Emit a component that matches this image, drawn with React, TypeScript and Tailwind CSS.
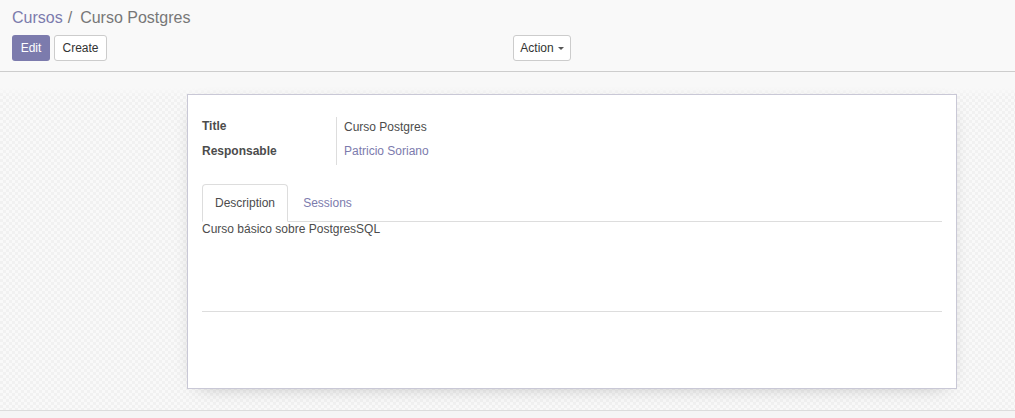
export default function App() {
  return (
    <div className="w-[1015px] h-[418px] overflow-hidden flex flex-col bg-white font-['Liberation_Sans',Arial,sans-serif] text-[12px] text-[#4c4c4c]">
      {/* control panel */}
      <div className="h-[72px] shrink-0 bg-[#f9f9f9] border-b border-[#cdcdcd] px-[12px] pt-[6px]">
        <div className="h-[24px] flex items-center text-[16px]">
          <a className="text-[#7c7bad]">Cursos</a>
          <span className="text-[#777] ml-[5px] mr-[8px]">/</span>
          <span className="text-[#777]">Curso Postgres</span>
        </div>
        <div className="mt-[5px] flex items-center">
          <button className="h-[26px] w-[38px] rounded-[3px] bg-[#7c7bad] text-white text-[12px]">Edit</button>
          <button className="ml-[4px] h-[26px] w-[53px] rounded-[3px] bg-white border border-[#ccc] text-[#333] text-[12px]">
            Create
          </button>
          <button className="ml-[406px] h-[26px] w-[58px] rounded-[3px] bg-white border border-[#ccc] text-[#333] text-[12px] flex items-center justify-center gap-[4px]">
            Action
            <span className="w-0 h-0 border-x-[3px] border-x-transparent border-t-[3px] border-t-[#555]" />
          </button>
        </div>
      </div>

      {/* form area */}
      <div className="flex-1 flex flex-col bg-[linear-gradient(#f8f8f8,#f8f8f8_16px,transparent_24px),conic-gradient(#f1f1f1_25%,#f9f9f9_0_50%,#f1f1f1_0_75%,#f9f9f9_0)] bg-[length:100%_100%,6px_6px]">
        <div className="mt-[22px] ml-[187px] w-[770px] h-[295px] bg-white border border-[#c9c8d6] shadow-[0_5px_20px_-12px_rgba(0,0,0,0.4)] px-[14px] pt-[22px]">
          <div className="flex">
            <div className="w-[134px] flex flex-col font-bold text-[12px]">
              <div className="h-[25px]">Title</div>
              <div className="h-[25px]">Responsable</div>
            </div>
            <div className="border-l border-[#ddd] pl-[7px] flex flex-col h-[48px] pt-[1px]">
              <div className="h-[25px]">Curso Postgres</div>
              <div className="h-[25px] text-[#7c7bad]">Patricio Soriano</div>
            </div>
          </div>

          <div className="mt-[17px] flex border-b border-[#ddd] h-[38px]">
            <div className="w-[86px] h-[38px] bg-white border border-[#ddd] border-b-white rounded-t-[4px] flex items-center justify-center text-[#4c4c4c]">
              Description
            </div>
            <div className="w-[79px] h-[37px] flex items-center justify-center text-[#7c7bad]">Sessions</div>
          </div>
          <div className="h-[90px] border-b border-[#ddd] leading-[14px]">Curso básico sobre PostgresSQL</div>
        </div>
        <div className="mt-auto h-[8px] border-t border-[#dcdcdc] bg-[#f5f5f5]" />
      </div>
    </div>
  );
}
